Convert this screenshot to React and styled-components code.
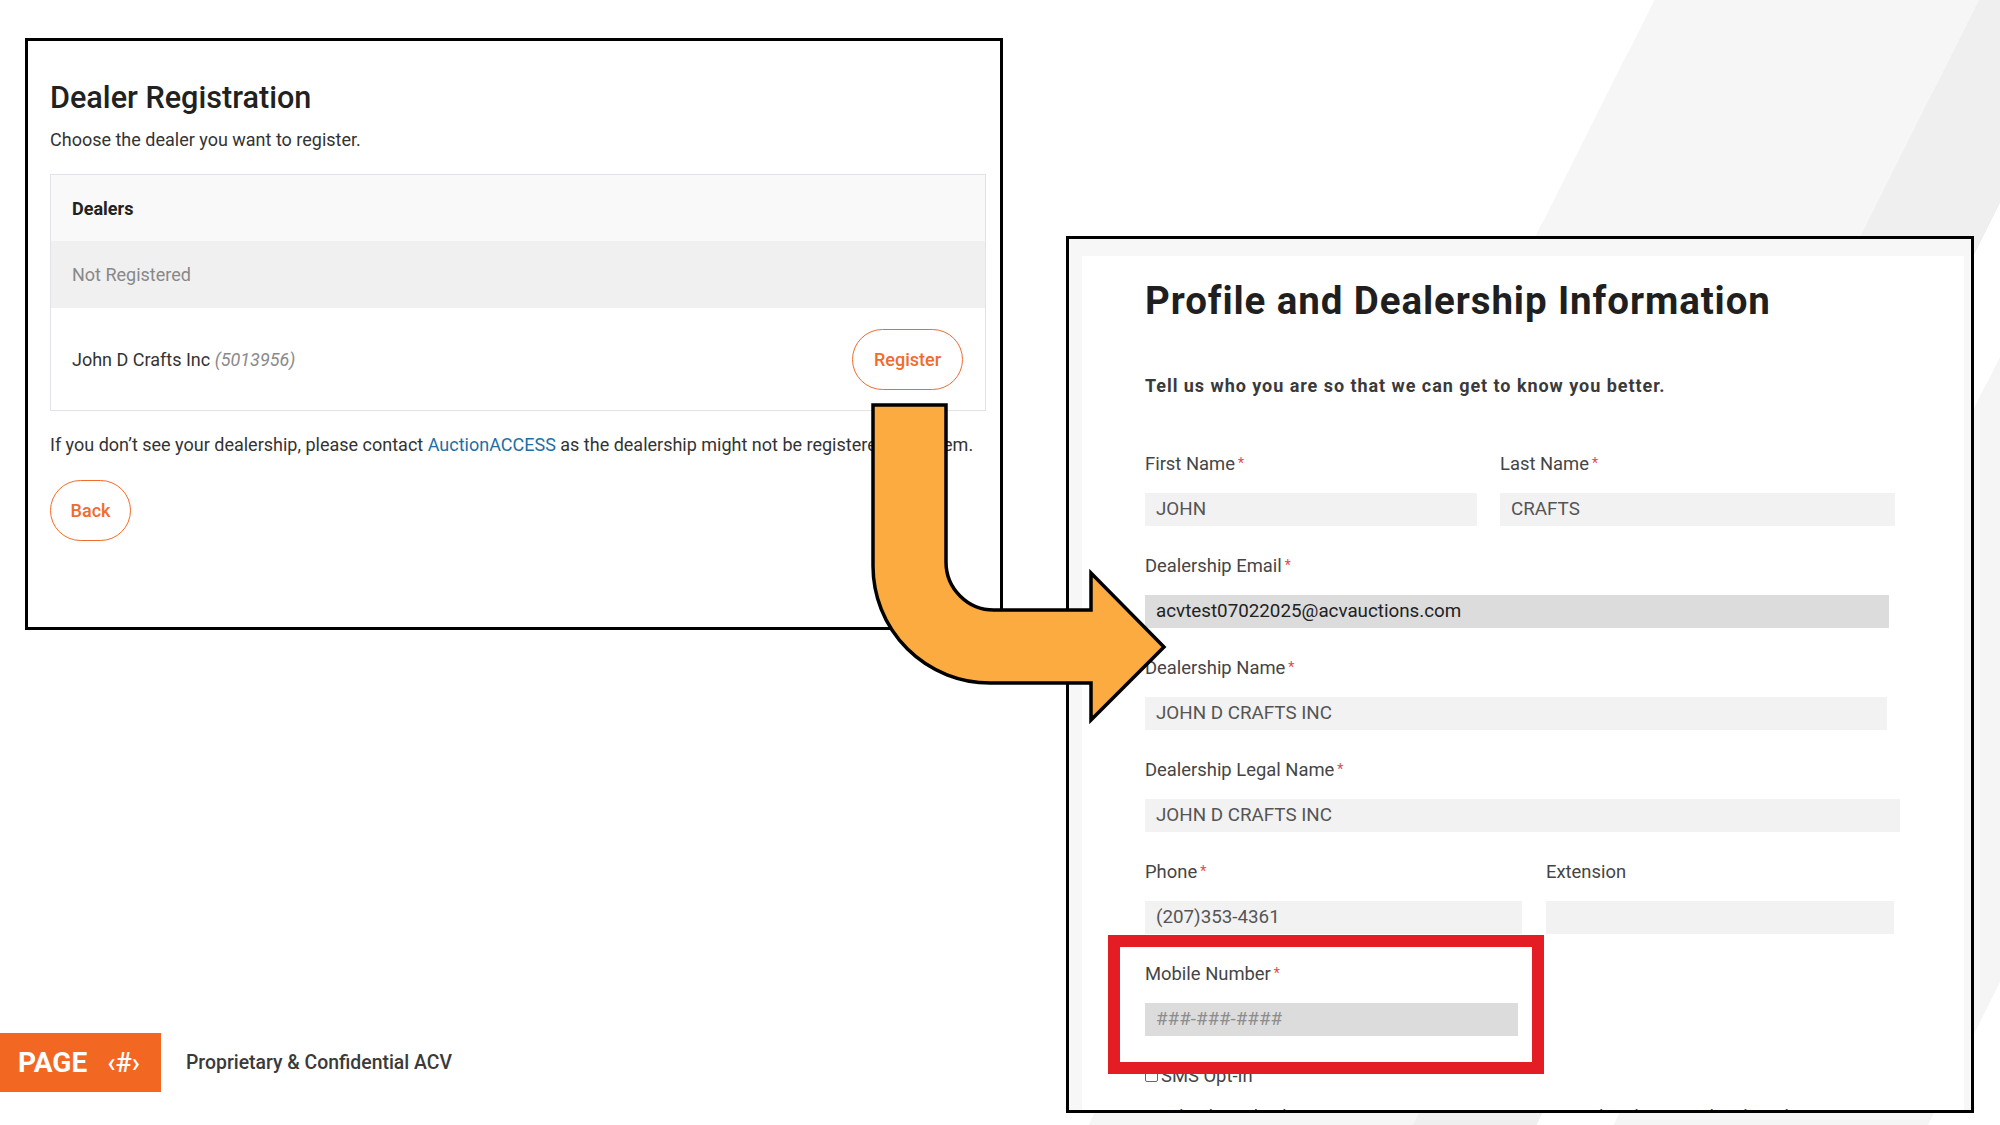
import React from "react";
import styled, { createGlobalStyle } from "styled-components";

const GlobalStyle = createGlobalStyle`
  * { box-sizing: border-box; }
  body {
    margin: 0;
    font-family: Roboto, "Liberation Sans", Arial, sans-serif;
    background: #fff;
  }
`;

const ORANGE = "#f26b2c";

const Slide = styled.div`
  position: relative;
  width: 2000px;
  height: 1125px;
  overflow: hidden;
  background: linear-gradient(
    116.7deg,
    #ffffff 0 1478px,
    #f6f6f6 1478px 1768px,
    #efefef 1768px 1878px,
    #ffffff 1878px 1947px,
    #f5f5f5 1947px 2228px,
    #ffffff 2228px
  );
`;

/* screenshots placed on the slide canvas */
const Shot = styled.div`
  position: absolute;
  left: ${(p) => p.x}px;
  top: ${(p) => p.y}px;
  width: ${(p) => p.w}px;
  height: ${(p) => p.h}px;
  border: 3px solid #000;
  overflow: hidden;
`;

const DealerShot = styled(Shot)`
  background: #fff;
  padding: 39px 21px 0 22px;
`;

const Title = styled.h1`
  margin: 0;
  font-size: 30.6px;
  line-height: 36px;
  font-weight: 500;
  color: #212121;
`;

const Lead = styled.p`
  margin: 12px 0 0;
  font-size: 18px;
  line-height: 24px;
  color: #333;
`;

const Table = styled.div`
  margin-top: 22px;
  width: 936px;
  border: 1px solid #e2e2ea;
`;

const TableRow = styled.div`
  display: flex;
  align-items: center;
  justify-content: space-between;
  height: ${(p) => p.h}px;
  padding: 0 22px 0 21px;
  background: ${(p) => p.bg || "#fff"};
  font-size: 18px;
  color: ${(p) => p.color || "#333"};
  font-weight: ${(p) => (p.bold ? 700 : 400)};
`;

const DealerId = styled.span`
  font-style: italic;
  color: #8a8a8a;
`;

const PillButton = styled.button`
  width: ${(p) => p.w}px;
  height: 61px;
  border: 1.5px solid ${ORANGE};
  border-radius: 31px;
  background: #fff;
  color: ${ORANGE};
  font-family: inherit;
  font-size: 18px;
  font-weight: 500;
  padding: 0;
`;

const Note = styled.p`
  margin: 22px 0 23px;
  font-size: 18px;
  line-height: 24px;
  color: #333;
  white-space: nowrap;
`;

const Link = styled.span`
  color: #1d6fa5;
`;

const ProfileShot = styled(Shot)`
  background: #f7f7f7;
  padding: 17px 7px 0 13px;
`;

const Card = styled.div`
  height: 100%;
  background: #fff;
  padding: 22px 0 0 63px;
  overflow: hidden;
`;

const FormTitle = styled.h2`
  margin: 0;
  font-size: 38.5px;
  line-height: 46px;
  font-weight: 700;
  letter-spacing: 0.9px;
  color: #1f1f1f;
`;

const FormLead = styled.p`
  margin: 50px 0 53.5px;
  font-size: 18px;
  line-height: 24px;
  font-weight: 700;
  color: #3a3a3a;
  letter-spacing: 0.95px;
`;

const Row = styled.div`
  display: grid;
  grid-template-columns: ${(p) => p.cols};
  column-gap: ${(p) => p.gap}px;
`;

const Field = styled.div`
  margin-bottom: 28px;
`;

const Label = styled.div`
  height: 24px;
  font-size: 18.4px;
  line-height: 24px;
  color: #454545;
`;

const Req = styled.span`
  color: #e5484d;
  font-size: 14px;
  line-height: 0;
  margin-left: 3px;
  vertical-align: 2px;
`;

const Input = styled.div`
  margin-top: 17px;
  height: 33px;
  width: ${(p) => (p.w ? `${p.w}px` : "100%")};
  background: ${(p) => (p.dark ? "#dcdcdc" : "#f2f2f2")};
  color: ${(p) => (p.placeholder ? "#8c8c8c" : p.dark ? "#222" : "#555")};
  font-size: 18.8px;
  line-height: 33px;
  padding-left: 11px;
  white-space: nowrap;
`;

const CheckLine = styled.label`
  display: flex;
  align-items: center;
  gap: 3px;
  height: 24px;
  font-size: 18.4px;
  line-height: 24px;
  color: #444;
`;

const Box = styled.span`
  width: 13px;
  height: 13px;
  border: 1px solid #666;
  border-radius: 2px;
`;

const Consent = styled.p`
  margin: 17px 0 0;
  font-size: 18.4px;
  line-height: 24px;
  color: #444;
  white-space: nowrap;
`;

const Highlight = styled.div`
  position: absolute;
  left: 1108px;
  top: 935px;
  width: 436px;
  height: 139px;
  border: 12px solid #e31d23;
`;

const ArrowSvg = styled.svg`
  position: absolute;
  left: 860px;
  top: 395px;
`;

const Footer = styled.div`
  position: absolute;
  left: 0;
  top: 1033px;
  display: flex;
  align-items: center;
  gap: 25px;
`;

const PageTag = styled.div`
  display: flex;
  align-items: center;
  width: 161px;
  height: 59px;
  padding-left: 18px;
  background: #f26722;
  color: #fff;
  font-weight: 700;
  font-size: 28px;
`;

const PageNum = styled.span`
  margin-left: 20px;
  font-size: 27px;
  font-weight: 500;
`;

const Confidential = styled.div`
  font-size: 19.4px;
  font-weight: 500;
  color: #3a3a3a;
`;

const Arrow = () => (
  <ArrowSvg width="310" height="335" viewBox="860 395 310 335">
    <path
      d="M873 405 L946 405 L946 562 A48 48 0 0 0 994 610 L1091 610 L1091 573 L1164 647 L1091 720 L1091 683 L990 683 A117 117 0 0 1 873 566 Z"
      fill="#fbab40"
      stroke="#000"
      strokeWidth="3.5"
      strokeLinejoin="miter"
    />
  </ArrowSvg>
);

const FormField = ({ label, required, value, w, dark, placeholder }) => (
  <Field>
    <Label>
      {label}
      {required && <Req>*</Req>}
    </Label>
    <Input w={w} dark={dark} placeholder={placeholder}>
      {value}
    </Input>
  </Field>
);

export default function App() {
  return (
    <>
      <GlobalStyle />
      <Slide>
        <DealerShot x={25} y={38} w={978} h={592}>
          <Title>Dealer Registration</Title>
          <Lead>Choose the dealer you want to register.</Lead>
          <Table>
            <TableRow h={66} bg="#f9f9f9" bold color="#222">
              Dealers
            </TableRow>
            <TableRow h={67} bg="#f0f0f0" color="#888">
              Not Registered
            </TableRow>
            <TableRow h={102}>
              <span>
                John D Crafts Inc <DealerId>(5013956)</DealerId>
              </span>
              <PillButton w={111}>Register</PillButton>
            </TableRow>
          </Table>
          <Note>
            If you don’t see your dealership, please contact{" "}
            <Link>AuctionACCESS</Link> as the dealership might not be registered
            in system.
          </Note>
          <PillButton w={81}>Back</PillButton>
        </DealerShot>

        <ProfileShot x={1066} y={236} w={908} h={877}>
          <Card>
            <FormTitle>Profile and Dealership Information</FormTitle>
            <FormLead>
              Tell us who you are so that we can get to know you better.
            </FormLead>
            <Row cols="332px 395px" gap={23}>
              <FormField label="First Name" required value="JOHN" />
              <FormField label="Last Name" required value="CRAFTS" />
            </Row>
            <FormField
              label="Dealership Email"
              required
              value="acvtest07022025@acvauctions.com"
              w={744}
              dark
            />
            <FormField
              label="Dealership Name"
              required
              value="JOHN D CRAFTS INC"
              w={742}
            />
            <FormField
              label="Dealership Legal Name"
              required
              value="JOHN D CRAFTS INC"
              w={755}
            />
            <Row cols="377px 348px" gap={24}>
              <FormField label="Phone" required value="(207)353-4361" />
              <FormField label="Extension" value="" />
            </Row>
            <FormField
              label="Mobile Number"
              required
              value="###-###-####"
              w={373}
              dark
              placeholder
            />
            <CheckLine>
              <Box />
              SMS Opt-In
            </CheckLine>
            <Consent>
              By checking this box you consent to receive promotional and
              personalized marketing text messages
            </Consent>
          </Card>
        </ProfileShot>

        <Highlight />
        <Arrow />

        <Footer>
          <PageTag>
            PAGE<PageNum>‹#›</PageNum>
          </PageTag>
          <Confidential>Proprietary &amp; Confidential ACV</Confidential>
        </Footer>
      </Slide>
    </>
  );
}
